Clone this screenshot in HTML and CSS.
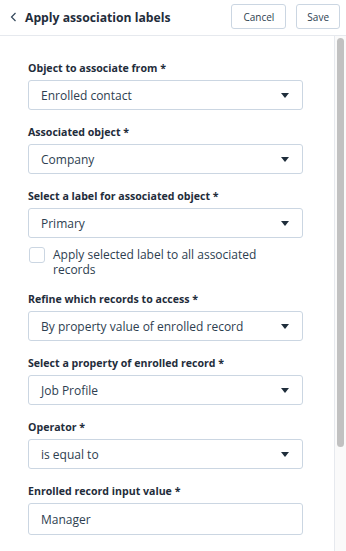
FILE: index.html
```html
<!DOCTYPE html>
<html lang="en">
<head>
  <meta charset="UTF-8" />
  <meta name="viewport" content="width=device-width, initial-scale=1.0"/>
  <title>Apply association labels</title>
  <link rel="stylesheet" href="styles.css">
</head>
<body>
  <header class="panel-header">
    <button class="back-btn" aria-label="Back">
      <svg width="7" height="10" viewBox="0 0 7 10"><path d="M5.5 1 L1.5 5 L5.5 9" fill="none" stroke="#33475b" stroke-width="1.2"/></svg>
    </button>
    <h1 class="panel-title">Apply association labels</h1>
    <div class="header-actions">
      <button class="btn">Cancel</button>
      <button class="btn btn-save">Save</button>
    </div>
  </header>

  <div class="panel-body">
    <form class="form">
      <div class="field">
        <label class="field-label">Object to associate from *</label>
        <div class="select"><span>Enrolled contact</span><i class="caret"></i></div>
      </div>

      <div class="field">
        <label class="field-label">Associated object *</label>
        <div class="select"><span>Company</span><i class="caret"></i></div>
      </div>

      <div class="field">
        <label class="field-label">Select a label for associated object *</label>
        <div class="select"><span>Primary</span><i class="caret"></i></div>
        <div class="check-row">
          <span class="checkbox"></span>
          <span class="check-text">Apply selected label to all associated records</span>
        </div>
      </div>

      <div class="field">
        <label class="field-label">Refine which records to access *</label>
        <div class="select"><span>By property value of enrolled record</span><i class="caret"></i></div>
      </div>

      <div class="field">
        <label class="field-label">Select a property of enrolled record *</label>
        <div class="select"><span>Job Profile</span><i class="caret"></i></div>
      </div>

      <div class="field">
        <label class="field-label">Operator *</label>
        <div class="select"><span>is equal to</span><i class="caret"></i></div>
      </div>

      <div class="field">
        <label class="field-label">Enrolled record input value *</label>
        <div class="text-input">Manager</div>
      </div>
    </form>

    <div class="scroll-track">
      <div class="scroll-thumb"></div>
    </div>
  </div>
</body>
</html>
```

FILE: styles.css
```css
:root {
  --text: #2d3e50;
  --label: #1f2d3b;
  --border: #cbd6e2;
  --line: #e6e9ee;
}

* {
  box-sizing: border-box;
}

body {
  margin: 0;
  height: 551px;
  overflow: hidden;
  font-family: 'Open Sans', sans-serif;
  color: var(--text);
  background: #fff;
}

.panel-header {
  height: 36px;
  display: flex;
  align-items: center;
  padding: 0 6px 0 8px;
  border-bottom: 1px solid var(--line);
}

.back-btn {
  border: 0;
  background: none;
  padding: 0;
  width: 9px;
  display: flex;
  align-items: center;
  margin: -1px 6px 0 2px;
}

.panel-title {
  flex: 1;
  margin: 0;
  font-size: 12.2px;
  font-weight: 700;
  color: var(--label);
  margin-top: -1px;
}

.header-actions {
  display: flex;
  gap: 10px;
  margin-top: -2px;
}

.btn {
  height: 25px;
  padding: 0 11px;
  border: 1px solid var(--border);
  border-radius: 3px;
  background: #fff;
  font-family: inherit;
  font-size: 10px;
  color: var(--text);
}

.btn-save {
  padding: 0 10px;
}

.panel-body {
  display: flex;
  height: 515px;
}

.form {
  flex: 1;
  padding: 25px 31px 0 28px;
  display: flex;
  flex-direction: column;
  gap: 15px;
}

.field-label {
  display: block;
  font-size: 10.6px;
  line-height: 14px;
  font-weight: 700;
  color: var(--label);
  margin-bottom: 5px;
}

.select,
.text-input {
  height: 30px;
  display: flex;
  align-items: center;
  justify-content: space-between;
  padding: 0 13px 0 12px;
  border: 1px solid var(--border);
  border-radius: 3px;
  font-size: 12px;
  color: var(--text);
  background: #fff;
}

.text-input {
  height: 32px;
}

.caret {
  width: 0;
  height: 0;
  border-left: 4px solid transparent;
  border-right: 4px solid transparent;
  border-top: 5px solid #1f2d3b;
}

.check-row {
  display: flex;
  align-items: flex-start;
  gap: 8px;
  margin-top: 9px;
  padding-left: 1px;
}

.checkbox {
  flex: none;
  width: 16px;
  height: 16px;
  border: 1px solid var(--border);
  border-radius: 3px;
  background: #fff;
}

.check-text {
  font-size: 12px;
  line-height: 15px;
  color: var(--text);
  padding-right: 30px;
}

.scroll-track {
  width: 12px;
  border-left: 1px solid var(--line);
  background: #fafafa;
  padding: 2px 2px 0 2px;
}

.scroll-thumb {
  height: 409px;
  border-radius: 4px;
  background: #c1c1c1;
}
```
